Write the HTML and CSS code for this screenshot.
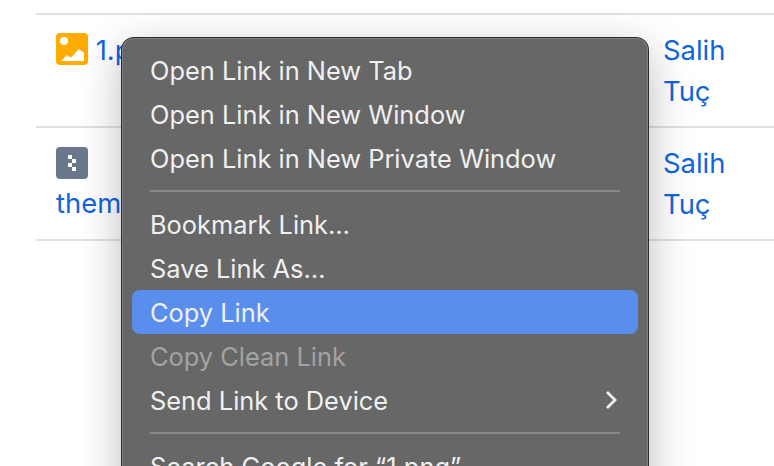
FILE: index.html
```html
<!DOCTYPE html>
<html lang="en">
<head>
<meta charset="utf-8">
<title>Context menu</title>
<link rel="stylesheet" href="styles.css">
</head>
<body>
<div class="table">
  <div class="row">
    <div class="name">
      <svg class="icon" viewBox="0 0 32 32"><rect width="32" height="32" rx="4" fill="#ffab00"/><circle cx="8" cy="8" r="4" fill="#fff"/><path d="M5 28 L11 22 L15 24.5 L23 16 L28 20 V28 Z" fill="#fff"/></svg>
      <a class="link" href="#">1.png</a>
    </div>
    <div class="author"><a class="link" href="#">Salih Tuç</a></div>
  </div>
  <div class="row">
    <div class="name">
      <svg class="icon icon-block" viewBox="0 0 32 32"><rect width="32" height="32" rx="4" fill="#6b778c"/><path d="M12 8h4v4h-4zM16 12h4v4h-4zM12 16h4v4h-4zM16 20h4v4h-4z" fill="#fff"/></svg>
      <a class="link" href="#">theme.zip</a>
    </div>
    <div class="author"><a class="link" href="#">Salih Tuç</a></div>
  </div>
</div>
<div class="menu">
  <div class="item">Open Link in New Tab</div>
  <div class="item">Open Link in New Window</div>
  <div class="item">Open Link in New Private Window</div>
  <div class="sep"></div>
  <div class="item">Bookmark Link…</div>
  <div class="item">Save Link As…</div>
  <div class="item active">Copy Link</div>
  <div class="item disabled">Copy Clean Link</div>
  <div class="item">Send Link to Device
    <svg class="chev" viewBox="0 0 12 20"><path d="M2 2 L10 10 L2 18" fill="none" stroke="#f0f0f0" stroke-width="2.8"/></svg>
  </div>
  <div class="sep"></div>
  <div class="item">Search Google for “1.png”</div>
</div>
</body>
</html>
```
FILE: styles.css
```css
html, body {
  margin: 0;
  height: 466px;
  overflow: hidden;
  background: #fff;
  font-family: Inter, "Liberation Sans", sans-serif;
}
.table {
  margin: 13px 0 0 36px;
  border-top: 2px solid #dfe1e6;
}
.row {
  display: flex;
  height: 111px;
  border-bottom: 2px solid #dfe1e6;
}
.name {
  width: 627px;
  padding: 15px 0 0 20px;
  box-sizing: border-box;
  font-size: 27.4px;
  line-height: 41px;
}
.author {
  width: 80px;
  padding-top: 15px;
  font-size: 27.4px;
  line-height: 41px;
}
.link {
  color: #1065e0;
  text-decoration: none;
}
.icon {
  width: 32px;
  height: 32px;
  vertical-align: -5px;
}
.icon-block {
  display: block;
  margin: 4px 0;
}
.menu {
  position: absolute;
  left: 122px;
  top: 38px;
  width: 526px;
  height: 470px;
  box-sizing: border-box;
  padding: 10px;
  background: #666766;
  border-radius: 12px;
  box-shadow: 0 0 0 1px #2b2b2b, inset 0 0 0 1px #808080, 0 12px 44px rgba(0, 0, 0, .28);
  font-size: 25.4px;
  color: #f0f0f0;
}
.item {
  display: flex;
  align-items: center;
  justify-content: space-between;
  height: 44px;
  box-sizing: border-box;
  padding: 0 18px;
  border-radius: 8px;
  white-space: nowrap;
}
.active {
  background: #5a8eec;
}
.disabled {
  color: #a3a3a3;
}
.sep {
  height: 2px;
  margin: 10px 18px;
  background: #888;
}
.chev {
  width: 12px;
  height: 20px;
  margin-right: 3px;
}
```
